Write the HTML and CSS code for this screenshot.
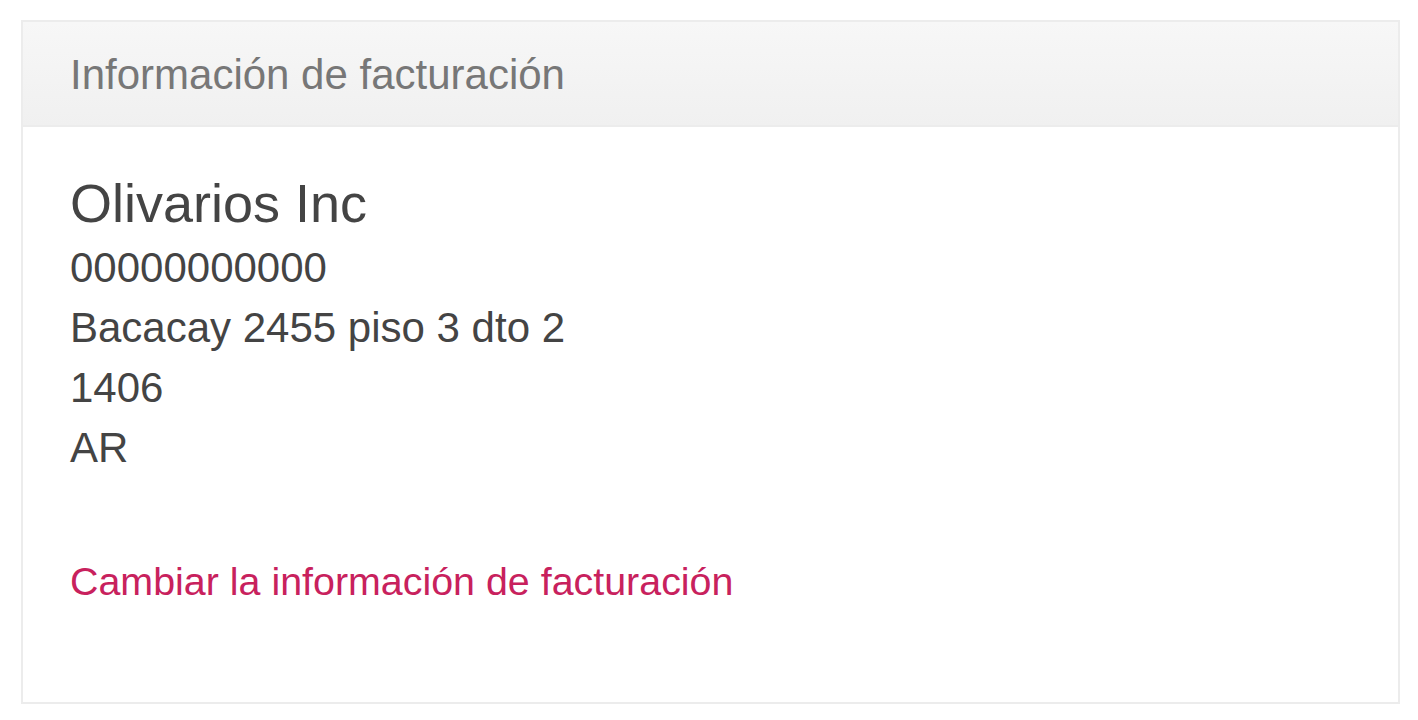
FILE: index.html
```html
<!DOCTYPE html>
<html lang="es">
<head>
    <meta charset="UTF-8">
    <meta name="viewport" content="width=device-width, initial-scale=1.0">
    <link rel="stylesheet" href="styles.css">
    <title>Información de facturación</title>
</head>
<body>
    <!-- panel -->
    <div class="pnl">
        <div class="pnl-hed">
            <h3 class="pnl-ttl">Información de facturación</h3>
        </div>
        <div class="pnl-bdy">
            <h4 class="cmp">Olivarios Inc</h4>
            <address class="adr">
                00000000000<br>
                Bacacay 2455 piso 3 dto 2<br>
                1406<br>
                AR
            </address>
            <p class="lnk-row">
                <a href="#" class="lnk">Cambiar la información de facturación</a>
            </p>
        </div>
    </div>
</body>
</html>
```

FILE: styles.css
```css
*{
    margin: 0;
    padding: 0;
    box-sizing: border-box;
}
body{
    padding: 20px 18px 0 21px;
    font-family: 'Liberation Sans', Arial, sans-serif;
    font-size: 42px;
    line-height: 60px;
    color: #444;
    background-color: #fff;
}
.pnl{
    border: 2px solid #ececec;
    background-color: #fff;
}
.pnl-hed{
    padding: 30px 45px 27px 47px;
    background-image: linear-gradient(to bottom, #f7f7f7, #f0f0f0);
    border-bottom: 2px solid #ececec;
}
.pnl-ttl{
    font-size: 42px;
    line-height: 46px;
    font-weight: normal;
    color: #777;
}
.pnl-bdy{
    padding: 47px 45px 91px 47px;
}
.cmp{
    font-size: 54px;
    line-height: 59px;
    font-weight: normal;
    color: #444;
    margin-bottom: 5px;
}
.adr{
    font-style: normal;
    margin-bottom: 73px;
}
.lnk-row{
    font-size: 39.4px;
}
.lnk{
    color: #c8215d;
    text-decoration: none;
}
```
